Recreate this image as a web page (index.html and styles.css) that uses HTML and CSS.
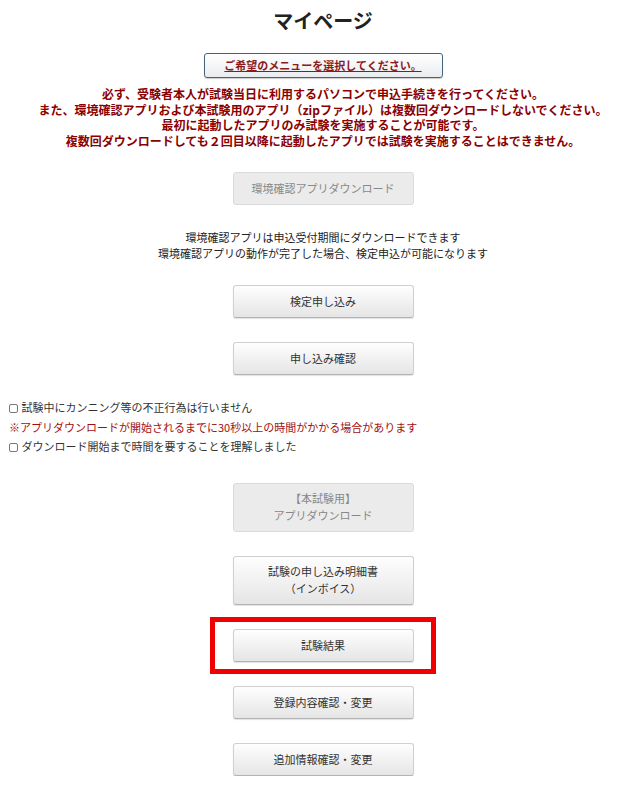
FILE: index.html
```html
<!DOCTYPE html>
<html lang="ja">
<head>
<meta charset="UTF-8">
<meta name="viewport" content="width=device-width, initial-scale=1.0">
<title>マイページ</title>
<link rel="stylesheet" href="styles.css">
</head>
<body>
<div class="page">
    <h1>マイページ</h1>

    <div class="menu-row">
        <div class="menu-box"><a href="#">ご希望のメニューを選択してください。</a></div>
    </div>

    <p class="warning">
        必ず、受験者本人が試験当日に利用するパソコンで申込手続きを行ってください。<br>
        また、環境確認アプリおよび本試験用のアプリ（zipファイル）は複数回ダウンロードしないでください。<br>
        最初に起動したアプリのみ試験を実施することが可能です。<br>
        複数回ダウンロードしても２回目以降に起動したアプリでは試験を実施することはできません。
    </p>

    <div class="btn-row">
        <button class="btn" disabled>環境確認アプリダウンロード</button>
    </div>

    <p class="info">
        環境確認アプリは申込受付期間にダウンロードできます<br>
        環境確認アプリの動作が完了した場合、検定申込が可能になります
    </p>

    <div class="btn-row">
        <button class="btn">検定申し込み</button>
    </div>
    <div class="btn-row">
        <button class="btn">申し込み確認</button>
    </div>

    <div class="checks">
        <label class="check"><input type="checkbox"> 試験中にカンニング等の不正行為は行いません</label>
        <div class="note">※アプリダウンロードが開始されるまでに30秒以上の時間がかかる場合があります</div>
        <label class="check"><input type="checkbox"> ダウンロード開始まで時間を要することを理解しました</label>
    </div>

    <div class="btn-row after-checks">
        <button class="btn tall" disabled>【本試験用】<br>アプリダウンロード</button>
    </div>
    <div class="btn-row">
        <button class="btn tall">試験の申し込み明細書<br>（インボイス）</button>
    </div>

    <div class="highlight">
        <button class="btn">試験結果</button>
    </div>

    <div class="btn-row after-highlight">
        <button class="btn">登録内容確認・変更</button>
    </div>
    <div class="btn-row">
        <button class="btn">追加情報確認・変更</button>
    </div>
</div>
</body>
</html>
```

FILE: styles.css
```css
html, body {
    overflow: hidden;
}
body {
    margin: 0;
    padding: 0;
    background-color: #fff;
    color: #333;
    font-family: "Noto Sans CJK JP", "Noto Sans", sans-serif;
    font-size: 11px;
}
.page {
    width: 646px;
}
h1 {
    margin: 0;
    padding-top: 6px;
    height: 30px;
    line-height: 30px;
    text-align: center;
    font-size: 20px;
    font-weight: bold;
    color: #222;
}
.menu-row {
    display: flex;
    justify-content: center;
    margin-top: 17px;
}
.menu-box {
    width: 237px;
    height: 23px;
    line-height: 23px;
    text-align: center;
    border: 1px solid #46627f;
    border-radius: 3px;
    background: linear-gradient(#ffffff, #e9ecef);
    box-shadow: 0 1px 1px rgba(0, 0, 0, 0.2);
}
.menu-box a {
    color: #8b1a1a;
    font-weight: bold;
    font-size: 11px;
    text-decoration: underline;
}
.warning {
    margin: 8px 0 0;
    text-align: center;
    font-size: 12px;
    line-height: 15.5px;
    font-weight: bold;
    color: #8b0000;
}
.btn-row {
    display: flex;
    justify-content: center;
    margin-top: 24px;
}
.btn-row.after-checks {
    margin-top: 26px;
}
.btn-row.after-highlight {
    margin-top: 12px;
}
.btn {
    width: 181px;
    height: 33px;
    padding: 0;
    font-family: inherit;
    font-size: 11px;
    line-height: 17px;
    color: #333;
    background: linear-gradient(#fefefe, #e5e5e5);
    border: 1px solid #d0d0d0;
    border-bottom-color: #b3b3b3;
    border-radius: 3px;
    box-shadow: 0 1px 1px rgba(0, 0, 0, 0.12);
    cursor: pointer;
}
.btn.tall {
    height: 49px;
}
.btn:disabled {
    color: #888;
    background: #ebebeb;
    border-color: #dadada;
    box-shadow: none;
    cursor: default;
}
.info {
    margin: 24px 0 0;
    text-align: center;
    line-height: 16px;
    color: #222;
}
.checks {
    margin-top: 23px;
    padding-left: 9px;
    line-height: 19.5px;
    color: #333;
}
.check {
    display: block;
}
.check input {
    -webkit-appearance: none;
    appearance: none;
    width: 9px;
    height: 9px;
    margin: 0 1px 0 0;
    border: 1px solid #777;
    border-radius: 2px;
    background: #fff;
    vertical-align: -1px;
}
.note {
    color: #a01010;
}
.highlight {
    display: flex;
    justify-content: center;
    width: 216px;
    margin: 12px auto 0;
    padding: 7px 0;
    border: 5px solid #f00000;
}
```
